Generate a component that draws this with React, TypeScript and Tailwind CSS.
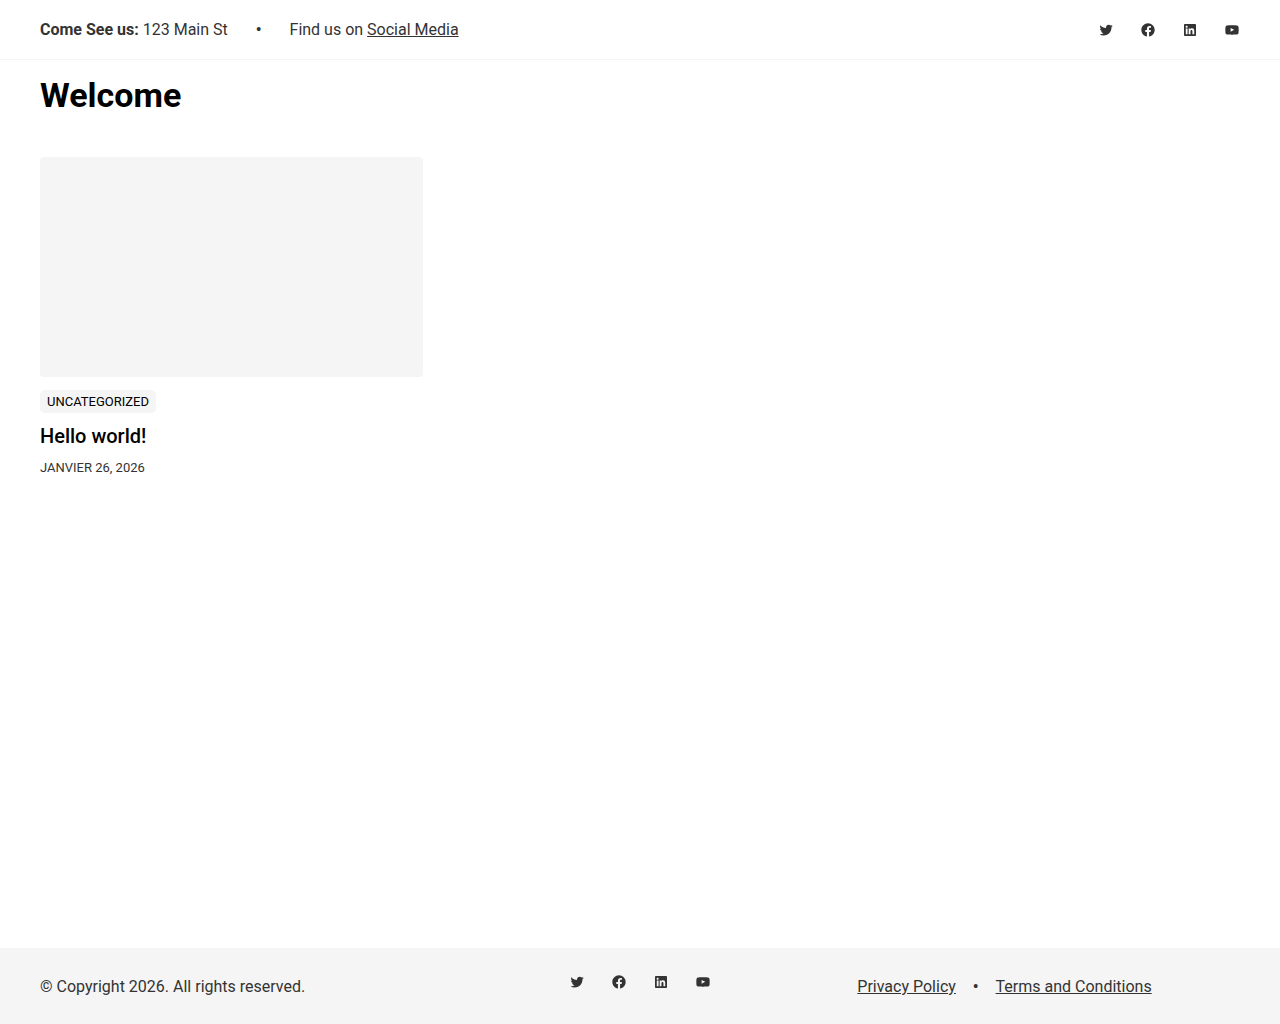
import React from 'react';

const socialLinks = [
  {
    name: 'Twitter',
    path: 'M22.23,5.924c-0.736,0.326-1.527,0.547-2.357,0.646c0.847-0.508,1.498-1.312,1.804-2.27c-0.793,0.47-1.671,0.812-2.606,0.996C18.324,4.498,17.257,4,16.077,4c-2.266,0-4.103,1.837-4.103,4.103c0,0.322,0.036,0.635,0.106,0.935C8.67,8.867,5.647,7.234,3.623,4.751C3.27,5.357,3.067,6.062,3.067,6.814c0,1.424,0.724,2.679,1.825,3.415c-0.673-0.021-1.305-0.206-1.859-0.513c0,0.017,0,0.034,0,0.052c0,1.988,1.414,3.647,3.292,4.023c-0.344,0.094-0.707,0.144-1.081,0.144c-0.264,0-0.521-0.026-0.772-0.074c0.522,1.63,2.038,2.816,3.833,2.85c-1.404,1.1-3.174,1.756-5.096,1.756c-0.331,0-0.658-0.019-0.979-0.057c1.816,1.164,3.973,1.843,6.29,1.843c7.547,0,11.675-6.252,11.675-11.675c0-0.178-0.004-0.355-0.012-0.531C20.985,7.47,21.68,6.747,22.23,5.924z',
  },
  {
    name: 'Facebook',
    path: 'M12 2C6.5 2 2 6.5 2 12c0 5 3.7 9.1 8.4 9.9v-7H7.9V12h2.5V9.8c0-2.5 1.5-3.9 3.8-3.9 1.1 0 2.2.2 2.2.2v2.5h-1.3c-1.2 0-1.6.8-1.6 1.6V12h2.8l-.4 2.9h-2.3v7C18.3 21.1 22 17 22 12c0-5.5-4.5-10-10-10z',
  },
  {
    name: 'LinkedIn',
    path: 'M19.7,3H4.3C3.582,3,3,3.582,3,4.3v15.4C3,20.418,3.582,21,4.3,21h15.4c0.718,0,1.3-0.582,1.3-1.3V4.3C21,3.582,20.418,3,19.7,3z M8.339,18.338H5.667v-8.59h2.672V18.338z M7.004,8.574c-0.857,0-1.549-0.694-1.549-1.548c0-0.855,0.691-1.548,1.549-1.548c0.854,0,1.547,0.694,1.547,1.548C8.551,7.881,7.858,8.574,7.004,8.574z M18.339,18.338h-2.669v-4.177c0-0.996-0.017-2.278-1.387-2.278c-1.389,0-1.601,1.086-1.601,2.206v4.249h-2.667v-8.59h2.559v1.174h0.037c0.356-0.675,1.227-1.387,2.526-1.387c2.703,0,3.203,1.779,3.203,4.092V18.338z',
  },
  {
    name: 'YouTube',
    path: 'M21.8,8.001c0,0-0.195-1.378-0.795-1.985c-0.76-0.797-1.613-0.801-2.004-0.847c-2.799-0.202-6.997-0.202-6.997-0.202h-0.009c0,0-4.198,0-6.997,0.202C4.608,5.216,3.756,5.22,2.995,6.016C2.395,6.623,2.2,8.001,2.2,8.001S2,9.62,2,11.238v1.517c0,1.618,0.2,3.237,0.2,3.237s0.195,1.378,0.795,1.985c0.761,0.797,1.76,0.771,2.205,0.855c1.6,0.153,6.8,0.201,6.8,0.201s4.203-0.006,7.001-0.209c0.391-0.047,1.243-0.051,2.004-0.847c0.6-0.607,0.795-1.985,0.795-1.985s0.2-1.618,0.2-3.237v-1.517C22,9.62,21.8,8.001,21.8,8.001z M9.935,14.594l-0.001-5.62l5.404,2.82L9.935,14.594z',
  },
];

const SocialIcons = () => (
  <ul className="flex items-center gap-[26px]">
    {socialLinks.map(({ name, path }) => (
      <li key={name}>
        <a href="#" aria-label={name} className="block">
          <svg viewBox="0 0 24 24" className="h-4 w-4 fill-current" aria-hidden="true">
            <path d={path} />
          </svg>
        </a>
      </li>
    ))}
  </ul>
);

const Header = () => (
  <header className="flex items-center justify-between border-b border-[#f5f5f5] px-10 py-4">
    <div className="flex items-center gap-7 leading-[27px]">
      <p>
        <strong className="font-bold">Come See us:</strong> 123 Main St
      </p>
      <span className="font-bold">•</span>
      <p>
        Find us on{' '}
        <a href="#" className="underline">
          Social Media
        </a>
      </p>
    </div>
    <SocialIcons />
  </header>
);

const PostCard = () => (
  <article>
    <a href="#" aria-label="Hello world!" className="block h-[220px] rounded bg-[#f5f5f5]" />
    <div className="mt-[13px] flex">
      <a
        href="#"
        className="rounded-[5px] bg-[#f5f5f5] px-[7px] text-[13px] leading-[23px] text-black uppercase"
      >
        Uncategorized
      </a>
    </div>
    <h2 className="mt-[11px] text-xl leading-6 font-medium text-black">
      <a href="#">Hello world!</a>
    </h2>
    <p className="mt-2 text-[13px] leading-[23px] uppercase">
      <time dateTime="2026-01-26">Janvier 26, 2026</time>
    </p>
  </article>
);

const Footer = () => (
  <footer className="grid grid-cols-3 gap-[26px] bg-[#f5f5f5] px-10 pt-[26px] pb-6 leading-[26px]">
    <p>© Copyright 2026. All rights reserved.</p>
    <div className="flex items-start justify-center">
      <SocialIcons />
    </div>
    <div className="flex gap-[17px]">
      <a href="#" className="underline">
        Privacy Policy
      </a>
      <span className="font-bold">•</span>
      <a href="#" className="underline">
        Terms and Conditions
      </a>
    </div>
  </footer>
);

const App = () => {
  return (
    <div className="flex min-h-screen flex-col bg-white font-['Roboto',sans-serif] text-base text-[#333333]">
      <Header />
      <main className="grow px-10 pt-4">
        <h1 className="text-[34px] leading-[39px] font-bold text-black">Welcome</h1>
        <div className="mt-[42px] grid grid-cols-3 gap-[26px]">
          <PostCard />
        </div>
      </main>
      <Footer />
    </div>
  );
};

export default App;
